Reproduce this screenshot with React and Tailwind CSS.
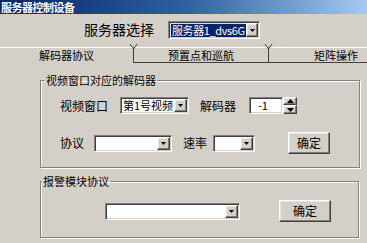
import React from "react";

const sunken =
  "border border-t-[#808080] border-l-[#808080] border-b-white border-r-white shadow-[inset_1px_1px_0_#404040,inset_-1px_-1px_0_#d4d0c8]";
const raised =
  "border border-t-white border-l-white border-b-[#404040] border-r-[#404040] shadow-[inset_-1px_-1px_0_#808080,inset_1px_1px_0_#e8e6e1]";

const Arrow = ({ up }) => (
  <svg width="7" height="4" viewBox="0 0 7 4" className="block">
    {up ? <path d="M3.5 0 L7 4 L0 4 Z" fill="#000" /> : <path d="M0 0 L7 0 L3.5 4 Z" fill="#000" />}
  </svg>
);

const Combo = ({ width, children }) => (
  <div className={`${sunken} bg-white h-[17px] flex items-center ${width}`}>
    <div className="flex-1 min-w-0 h-full flex items-center pl-[2px] text-[11px] leading-none overflow-hidden whitespace-nowrap">
      {children}
    </div>
    <div className={`${raised} bg-[#d4d0c8] w-[13px] h-[13px] mr-[1px] flex items-center justify-center`}>
      <svg width="5" height="3" viewBox="0 0 5 3" className="block">
        <path d="M0 0 L5 0 L2.5 3 Z" fill="#000" />
      </svg>
    </div>
  </div>
);

const Button = ({ width, children }) => (
  <div className={`${raised} bg-[#d4d0c8] h-[22px] flex items-center justify-center text-[12px] ${width}`}>
    {children}
  </div>
);

const TabSep = () => (
  <svg width="9" height="6" viewBox="0 0 9 6" className="absolute -left-[5px] -top-[4px]">
    <path d="M1 0 L4.5 5 L8 0" stroke="#404040" fill="none" strokeWidth="1" />
  </svg>
);

export default function App() {
  return (
    <div className="w-[367px] h-[243px] bg-[#d4d0c8] overflow-hidden text-black font-['Noto_Sans_CJK_SC',sans-serif]">
      <div className="h-[14px] bg-gradient-to-r from-[#0a246a] via-[#2f5f9e] to-[#a6caf0] text-white text-[11px] font-bold leading-[14px] pl-[1px] tracking-[-0.5px] whitespace-nowrap">
        服务器控制设备
      </div>

      <div className="h-[29px] flex items-start pl-[84px] pt-[7px]">
        <span className="text-[14px] leading-[17px] w-[70px] whitespace-nowrap">服务器选择</span>
        <div className={`${sunken} bg-white h-[18px] w-[92px] ml-[14px] flex items-center`}>
          <div className="flex-1 min-w-0 h-full flex items-center pl-[2px] overflow-hidden">
            <span className="bg-[#0a246a] text-white text-[11px] leading-[13px] px-[1px] tracking-[-0.4px] outline outline-1 outline-dotted outline-[#a6caf0] whitespace-nowrap">
              服务器1_dvs6G
            </span>
          </div>
          <div className={`${raised} bg-[#d4d0c8] w-[12px] h-[14px] mr-[1px] flex items-center justify-center`}>
            <svg width="5" height="3" viewBox="0 0 5 3" className="block">
              <path d="M0 0 L5 0 L2.5 3 Z" fill="#000" />
            </svg>
          </div>
        </div>
      </div>

      <div className="h-[20px] pt-[4px] flex">
        <div className="w-[133px] border-t border-white flex items-center justify-center text-[11px] leading-none">
          解码器协议
        </div>
        <div className="relative w-[135px] border-t border-white border-l border-l-[#404040] border-b border-b-[#404040] flex items-center justify-center text-[11px] leading-none">
          <TabSep />
          预置点和巡航
        </div>
        <div className="relative flex-1 border-t border-white border-l border-l-[#404040] border-b border-b-[#404040] flex items-center justify-end pr-[9px] text-[11px] leading-none">
          <TabSep />
          矩阵操作
        </div>
      </div>

      <fieldset className="ml-[40px] mt-[10px] w-[320px] h-[95px] border border-[#808080] shadow-[inset_1px_1px_0_#fff,1px_1px_0_#fff] px-0">
        <legend className="ml-[4px] px-[1px] text-[11px] leading-[14px]">视频窗口对应的解码器</legend>
        <div className="flex items-center h-[17px] mt-[10px] pl-[19px]">
          <span className="text-[12px] w-[48px] leading-none">视频窗口</span>
          <Combo width="w-[69px] ml-[12px]">第1号视频</Combo>
          <span className="text-[12px] w-[36px] ml-[11px] leading-none">解码器</span>
          <div className={`${sunken} bg-white h-[17px] w-[34px] ml-[13px] flex items-center pl-[8px] text-[11px]`}>
            -1
          </div>
          <div className="flex flex-col h-[17px] w-[14px]">
            <div className={`${raised} bg-[#d4d0c8] h-[8px] flex items-center justify-center`}>
              <Arrow up />
            </div>
            <div className={`${raised} bg-[#d4d0c8] h-[9px] flex items-center justify-center`}>
              <Arrow />
            </div>
          </div>
        </div>
        <div className="flex items-center h-[22px] mt-[18px] pl-[19px]">
          <span className="text-[12px] w-[24px] leading-none">协议</span>
          <Combo width="w-[78px] ml-[10px]" />
          <span className="text-[12px] w-[24px] ml-[11px] leading-none">速率</span>
          <Combo width="w-[42px] ml-[6px]" />
          <Button width="w-[42px] ml-[33px]">确定</Button>
        </div>
      </fieldset>

      <fieldset className="ml-[40px] mt-[6px] w-[319px] h-[64px] border border-[#808080] shadow-[inset_1px_1px_0_#fff,1px_1px_0_#fff] px-0">
        <legend className="ml-[1px] px-[1px] text-[11px] leading-[14px]">报警模块协议</legend>
        <div className="flex items-center h-[22px] mt-[12px] pl-[64px]">
          <Combo width="w-[135px]" />
          <Button width="w-[52px] ml-[39px]">确定</Button>
        </div>
      </fieldset>
    </div>
  );
}
